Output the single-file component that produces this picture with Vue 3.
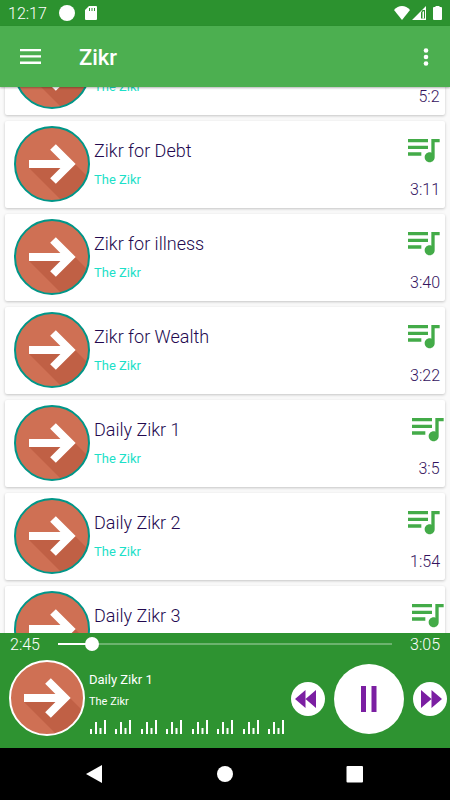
<template>
  <div class="screen">
    <header class="status-bar">
      <span class="clock">12:17</span>
      <span class="status-dot"></span>
      <svg class="sd-card" viewBox="0 0 12 14">
        <path fill="#fff" fill-rule="evenodd" d="M4 0h7a1 1 0 0 1 1 1v12a1 1 0 0 1-1 1H1a1 1 0 0 1-1-1V4zM4 2v3h1V2zM6.500 2v3h1V2zM9 2v3h1V2z" />
      </svg>
      <div class="status-right">
        <svg class="wifi" viewBox="0 0 16 14">
          <path fill="#fff" d="M8 14L0 4Q3.500 0 8 0t8 4z" />
        </svg>
        <svg class="signal" viewBox="0 0 14 14">
          <path fill="#fff" fill-rule="evenodd" d="M14 0v14H0zM13 4h-2.500L9 6.500V12.500h4z" />
          <path fill="#fff" d="M10.500 12.500h1.500V5l-1.500 1z" />
        </svg>
        <svg class="battery" viewBox="0 0 9 14">
          <path fill="#fff" d="M2.500 0h4v1H8a1 1 0 0 1 1 1v11a1 1 0 0 1-1 1H1a1 1 0 0 1-1-1V2a1 1 0 0 1 1-1h1.500z" />
        </svg>
      </div>
    </header>

    <div class="app-bar">
      <button class="icon-button" type="button" aria-label="Menu">
        <svg class="menu-icon" viewBox="0 0 21 15">
          <path fill="#fff" d="M0 0h21v2.300H0zM0 6.300h21v2.300H0zM0 12.600h21v2.300H0z" />
        </svg>
      </button>
      <h1 class="app-title">Zikr</h1>
      <button class="icon-button" type="button" aria-label="More options">
        <svg class="more-icon" viewBox="0 0 6 18">
          <circle cx="3" cy="2.500" r="2.300" fill="#fff" />
          <circle cx="3" cy="9" r="2.300" fill="#fff" />
          <circle cx="3" cy="15.500" r="2.300" fill="#fff" />
        </svg>
      </button>
    </div>

    <main ref="list" class="track-list">
      <article v-for="(track, index) in tracks" :key="index" class="track">
        <svg class="cover" viewBox="0 0 76 76">
          <circle cx="38" cy="38" r="37" fill="#cf7054" />
          <path fill="#c06045" d="M15 42L47 74A37 37 0 0 0 73 50L61 38L57 42z" />
          <path fill="none" stroke="#fff" stroke-width="8" d="M15 38h40M39 21L56 38L39 55" />
          <circle cx="38" cy="38" r="37" fill="none" stroke="#009688" stroke-width="2" />
        </svg>
        <div class="track-text">
          <h2 class="track-title">{{ track.title }}</h2>
          <p class="track-artist">{{ artist }}</p>
        </div>
        <div class="track-side">
          <svg class="queue-icon" viewBox="0 0 24 24">
            <path fill="#43ab48" d="M15 6H3v2h12V6zm0 4H3v2h12v-2zM3 16h8v-2H3v2zM17 6v8.180c-.310-.110-.650-.180-1-.180-1.660 0-3 1.340-3 3s1.340 3 3 3 3-1.340 3-3V8h3V6h-5z" />
          </svg>
          <span class="track-time">{{ track.time }}</span>
        </div>
      </article>
    </main>

    <section class="player">
      <div class="seek">
        <span>2:45</span>
        <input
          v-model="position"
          class="seek-bar"
          type="range"
          min="0"
          max="1000"
          aria-label="Position"
          :style="{ '--played': position / 10 + '%' }"
        />
        <span>3:05</span>
      </div>
      <div class="now-playing">
        <svg class="cover" viewBox="0 0 76 76">
          <circle cx="38" cy="38" r="37" fill="#cf7054" />
          <path fill="#c06045" d="M15 42L47 74A37 37 0 0 0 73 50L61 38L57 42z" />
          <path fill="none" stroke="#fff" stroke-width="8" d="M15 38h40M39 21L56 38L39 55" />
          <circle cx="38" cy="38" r="37" fill="none" stroke="#fff" stroke-width="2" />
        </svg>
        <div class="now-text">
          <div class="now-title">Daily Zikr 1</div>
          <div class="now-artist">{{ artist }}</div>
          <div class="equalizer">
            <svg v-for="n in 8" :key="n" class="bars" viewBox="0 0 16 14">
              <path fill="#fff" d="M0 9h2v5H0zM5 2h2v12H5zM9.500 8h2v6h-2zM14 0h2v14h-2z" />
            </svg>
          </div>
        </div>
        <div class="controls">
          <button class="round" type="button" aria-label="Previous">
            <svg class="skip-icon" viewBox="0 0 26 18">
              <path fill="#7b1fa2" d="M10.500 0v18L0 9zM21 0v18L10.500 9z" />
            </svg>
          </button>
          <button class="round big" type="button" aria-label="Pause">
            <svg class="pause-icon" viewBox="0 0 16 26">
              <path fill="#7b1fa2" d="M0 0h5v26H0zM10.500 0h5v26h-5z" />
            </svg>
          </button>
          <button class="round" type="button" aria-label="Next">
            <svg class="skip-icon" viewBox="0 0 26 18">
              <path fill="#7b1fa2" d="M4 0l10.500 9L4 18zM14.500 0L25 9l-10.500 9z" />
            </svg>
          </button>
        </div>
      </div>
    </section>

    <nav class="nav-bar">
      <button class="nav-button" type="button" aria-label="Back">
        <svg class="nav-icon" viewBox="0 0 18 18">
          <path fill="#fff" d="M16 0v18L0 9z" />
        </svg>
      </button>
      <button class="nav-button" type="button" aria-label="Home">
        <svg class="nav-icon" viewBox="0 0 18 18">
          <circle cx="9" cy="9" r="8" fill="#fff" />
        </svg>
      </button>
      <button class="nav-button" type="button" aria-label="Recent apps">
        <svg class="nav-icon" viewBox="0 0 18 18">
          <rect x="0.500" y="1" width="16.500" height="16.500" rx="1" fill="#fff" />
        </svg>
      </button>
    </nav>
  </div>
</template>

<script setup>
import { onMounted, ref } from 'vue';

const artist = 'The Zikr';

const tracks = [
  { title: '', time: '5:2' },
  { title: 'Zikr for Debt', time: '3:11' },
  { title: 'Zikr for illness', time: '3:40' },
  { title: 'Zikr for Wealth', time: '3:22' },
  { title: 'Daily Zikr 1', time: '3:5' },
  { title: 'Daily Zikr 2', time: '1:54' },
  { title: 'Daily Zikr 3', time: '' },
];

const position = ref(85);
const list = ref(null);

// open the list scrolled a little past its first entry
onMounted(() => {
  list.value.scrollTop = 64;
});
</script>

<style>
body {
  margin: 0;
}
</style>

<style scoped>
.screen {
  display: flex;
  flex-direction: column;
  height: 100vh;
  background: #fafafa;
  font-family: Roboto, "Liberation Sans", sans-serif;
}

button {
  display: flex;
  align-items: center;
  justify-content: center;
  padding: 0;
  border: 0;
  background: none;
  cursor: pointer;
}

svg {
  display: block;
  flex: none;
}

.status-bar {
  display: flex;
  align-items: center;
  height: 26px;
  padding: 0 8px;
  background: #2c922f;
  color: #fff;
}

.clock {
  padding-top: 2px;
  font-size: 16px;
  font-weight: 300;
  line-height: 26px;
}

.status-dot {
  width: 16px;
  height: 16px;
  margin: 0 10px 0 12px;
  border-radius: 50%;
  background: #fff;
}

.sd-card {
  width: 12px;
  height: 14px;
}

.status-right {
  display: flex;
  margin-left: auto;
}

.wifi {
  width: 16px;
  height: 14px;
}

.signal {
  width: 14px;
  height: 14px;
  margin: 0 7px 0 2px;
}

.battery {
  width: 9px;
  height: 14px;
}

.app-bar {
  position: relative;
  display: flex;
  align-items: center;
  height: 61px;
  padding: 0 11px 0 10px;
  background: #4caf50;
  box-shadow: 0 1px 2px rgba(0, 0, 0, 0.3);
  color: #fff;
}

.icon-button {
  width: 40px;
  height: 40px;
}

.icon-button:last-child {
  width: 26px;
}

.menu-icon {
  width: 21px;
  height: 15px;
}

.more-icon {
  width: 6px;
  height: 18px;
}

.app-title {
  flex: 1;
  margin: 2px 0 0 29px;
  font-size: 22px;
  font-weight: 500;
  line-height: 28px;
}

.track-list {
  display: flex;
  flex: 1;
  flex-direction: column;
  gap: 6px;
  min-height: 0;
  padding: 5px;
  overflow-y: auto;
  scrollbar-width: none;
}

.track {
  display: flex;
  flex: none;
  height: 87px;
  overflow: hidden;
  border-radius: 2px;
  background: #fff;
  box-shadow: 0 1px 3px rgba(0, 0, 0, 0.22);
}

.cover {
  width: 76px;
  height: 76px;
}

.track .cover {
  margin: 5px 4px 0 9px;
}

.track-text {
  flex: 1;
  padding-top: 18px;
}

.track-title {
  min-height: 24px;
  margin: 0;
  color: #22094f;
  font-size: 18px;
  font-weight: 300;
  line-height: 24px;
}

.track-artist {
  margin: 8px 0 0;
  color: #1ddfc8;
  font-size: 13px;
  line-height: 18px;
}

.track-side {
  display: flex;
  flex-direction: column;
  align-items: center;
  min-width: 22px;
  padding: 8px 5px 0 0;
}

/* takes no width, so it stays centred over the time */
.queue-icon {
  width: 40px;
  height: 40px;
  margin: 0 -18px 0 -22px;
}

.track-time {
  margin-top: 11px;
  color: #34135e;
  font-size: 16px;
  font-weight: 300;
  line-height: 20px;
}

.player {
  padding-bottom: 12px;
  background: #2e9331;
  color: #fff;
}

.seek {
  display: flex;
  align-items: center;
  justify-content: space-between;
  height: 22px;
  padding: 0 10px;
  font-size: 16px;
  font-weight: 300;
}

.seek-bar {
  flex: 1;
  height: 14px;
  margin: 0 18px;
  appearance: none;
  background: linear-gradient(#fff, #fff) left center / var(--played) 2px no-repeat,
    linear-gradient(#6cb36e, #6cb36e) center / 100% 2px no-repeat;
}

.seek-bar::-webkit-slider-thumb {
  width: 14px;
  height: 14px;
  appearance: none;
  border-radius: 50%;
  background: #fff;
}

.now-playing {
  display: flex;
  align-items: center;
  padding: 5px 3px 0 9px;
}

.now-text {
  flex: 1;
  margin-left: 4px;
  padding-top: 8px;
}

.now-title {
  font-size: 13px;
  line-height: 18px;
}

.now-artist {
  margin-top: 6px;
  font-size: 11px;
  line-height: 14px;
}

.equalizer {
  display: flex;
  justify-content: space-between;
  margin: 11px 7px 0 1px;
}

.bars {
  width: 16px;
  height: 14px;
}

.controls {
  display: flex;
  align-items: center;
  gap: 9px;
  padding-top: 2px;
}

.round {
  width: 34px;
  height: 34px;
  border-radius: 50%;
  background: #fff;
}

.round.big {
  width: 70px;
  height: 70px;
}

.skip-icon {
  width: 26px;
  height: 18px;
}

.pause-icon {
  width: 16px;
  height: 26px;
}

.nav-bar {
  display: flex;
  justify-content: center;
  height: 52px;
  background: #000;
}

.nav-button {
  width: 130px;
}

.nav-icon {
  width: 18px;
  height: 18px;
}
</style>
